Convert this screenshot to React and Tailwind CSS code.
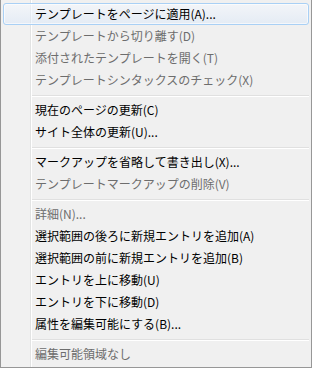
import React from 'react';

const groups = [
  [
    { label: 'テンプレートをページに適用(A)...', active: true },
    { label: 'テンプレートから切り離す(D)', disabled: true },
    { label: '添付されたテンプレートを開く(T)', disabled: true },
    { label: 'テンプレートシンタックスのチェック(X)', disabled: true },
  ],
  [
    { label: '現在のページの更新(C)' },
    { label: 'サイト全体の更新(U)...' },
  ],
  [
    { label: 'マークアップを省略して書き出し(X)...' },
    { label: 'テンプレートマークアップの削除(V)', disabled: true },
  ],
  [
    { label: '詳細(N)...', disabled: true },
    { label: '選択範囲の後ろに新規エントリを追加(A)' },
    { label: '選択範囲の前に新規エントリを追加(B)' },
    { label: 'エントリを上に移動(U)' },
    { label: 'エントリを下に移動(D)' },
    { label: '属性を編集可能にする(B)...' },
  ],
  [
    { label: '編集可能領域なし', disabled: true },
  ],
];

const MenuItem = ({ label, disabled, active }) => {
  if (active) {
    return (
      <div className="h-[22px] flex items-center pl-[31px] rounded-[3px] border border-[#a9d0f5] bg-[linear-gradient(to_bottom,rgba(245,249,255,0.55),rgba(214,230,250,0.45))] shadow-[inset_0_0_0_1px_rgba(255,255,255,0.6)] text-black">
        {label}
      </div>
    );
  }
  return (
    <div className={`h-[22px] flex items-center pl-[32px] ${disabled ? 'text-[#6d6d6d]' : 'text-black'}`}>
      {label}
    </div>
  );
};

const Separator = () => (
  <div className="h-[8px] pt-[4px] ml-[29px]">
    <div className="h-px bg-[#e0e0e0]" />
    <div className="h-px bg-white" />
  </div>
);

export default function App() {
  return (
    <div
      className="w-[312px] h-[368px] border-l border-r border-b border-[#979797] bg-[#f0f0f0] bg-[linear-gradient(to_right,#f1f1f1_29px,#e2e3e3_29px,#e2e3e3_30px,#ffffff_30px,#ffffff_31px,#f0f0f0_31px)] pt-[3px] px-[2px] text-[12px] leading-[22px] whitespace-nowrap"
      style={{ fontFamily: '"Noto Sans CJK JP", "Noto Sans", sans-serif' }}
    >
      {groups.map((items, gi) => (
        <React.Fragment key={gi}>
          {gi > 0 && <Separator />}
          {items.map((it) => (
            <MenuItem key={it.label} {...it} />
          ))}
        </React.Fragment>
      ))}
    </div>
  );
}
